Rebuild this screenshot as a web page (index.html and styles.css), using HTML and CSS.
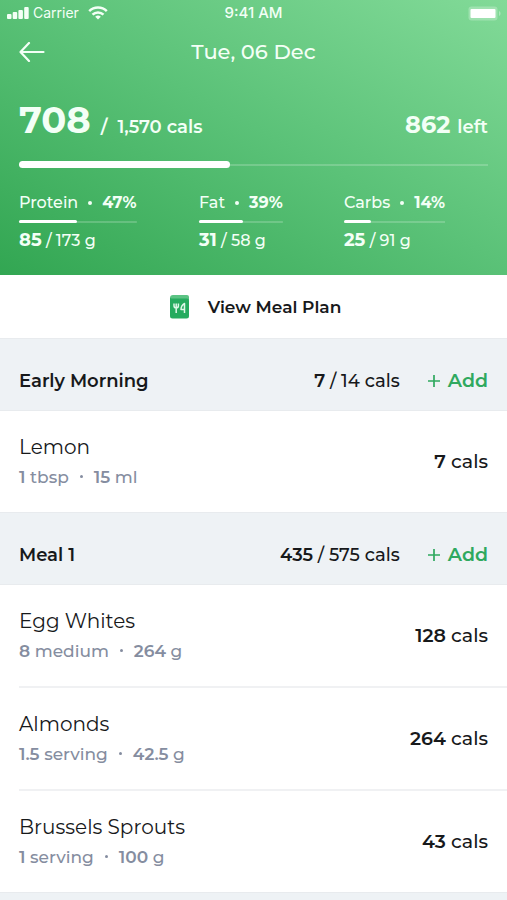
FILE: index.html
```html
<!DOCTYPE html>
<html lang="en">
<head>
<meta charset="utf-8">
<meta name="viewport" content="width=device-width, initial-scale=1">
<title>Food diary</title>
<link rel="stylesheet" href="styles.css">
</head>
<body>
<div class="app">
  <header class="summary">
    <div class="status">
      <div class="status-left">
        <svg width="22" height="12" viewBox="0 0 22 12" fill="currentColor" aria-hidden="true"><rect x="0" y="7" width="4.500" height="5" rx="1"/><rect x="5.700" y="5" width="4.500" height="7" rx="1"/><rect x="11.400" y="3" width="4.500" height="9" rx="1"/><rect x="17.200" y="0" width="4.500" height="12" rx="1"/></svg>
        <span>Carrier</span>
        <svg class="wifi" width="20" height="14" viewBox="0 0 20 14" fill="none" stroke="currentColor" stroke-width="2.5" aria-hidden="true"><path d="M1.2 5.2a12.5 12.5 0 0 1 17.6 0M4.5 8.700a7.8 7.8 0 0 1 11 0"/><path d="M7.2 10.8a4 4 0 0 1 5.6 0L10 13.6z" fill="currentColor" stroke="none"/></svg>
      </div>
      <span class="clock">9:41 AM</span>
      <svg class="battery" width="33" height="15" viewBox="0 0 33 15" aria-hidden="true"><rect x=".5" y=".5" width="29" height="14" rx="3" fill="#fff" fill-opacity=".25"/><rect x="2.500" y="3" width="25" height="9" rx="1" fill="#fff"/><path d="M31 5c2 .7 2 4.300 0 5z" fill="#fff" fill-opacity=".35"/></svg>
    </div>
    <nav class="topbar">
      <button class="back" type="button" aria-label="Back"><svg width="26" height="20" viewBox="0 0 26 20" fill="none" stroke="currentColor" stroke-width="2.2" stroke-linecap="round" stroke-linejoin="round" aria-hidden="true"><path d="M10 1 1.500 10l8.500 9M1.500 10h23"/></svg></button>
      <h1>Tue, 06 Dec</h1>
    </nav>
    <div class="totals">
      <p class="eaten"><strong>708</strong><span>/</span><span>1,570 cals</span></p>
      <p class="left"><strong>862</strong> left</p>
    </div>
    <div class="bar bar-main"><span class="fill" style="width:45%"></span></div>
    <div class="macros">
      <div class="macro">
        <p class="macro-name"><span>Protein</span><i class="dot"></i><b>47%</b></p>
        <div class="bar"><span class="fill" style="width:49%"></span></div>
        <p class="macro-amount"><b>85</b> / 173 g</p>
      </div>
      <div class="macro">
        <p class="macro-name"><span>Fat</span><i class="dot"></i><b>39%</b></p>
        <div class="bar"><span class="fill" style="width:53%"></span></div>
        <p class="macro-amount"><b>31</b> / 58 g</p>
      </div>
      <div class="macro">
        <p class="macro-name"><span>Carbs</span><i class="dot"></i><b>14%</b></p>
        <div class="bar"><span class="fill" style="width:27%"></span></div>
        <p class="macro-amount"><b>25</b> / 91 g</p>
      </div>
    </div>
  </header>

  <button class="plan" type="button">
    <svg width="20" height="24" viewBox="0 0 20 24" aria-hidden="true"><path d="M3 0h14a2 2 0 0 1 2 2v3H0V3a3 3 0 0 1 3-3z" fill="#5cc384"/><path d="M0 2.500c.3.800 1 1 2 1h15a2 2 0 0 1 2 2V21a2.500 2.500 0 0 1-2.500 2.500h-14A2.500 2.500 0 0 1 0 21z" fill="#26ab5f"/><path d="M4 8.500v2.300a2.200 2.200 0 0 0 4.400 0V8.500M6.200 8.500V18M14.500 18V8.500c-2.300 1.200-3.400 3.400-3.500 6h3.500" fill="none" stroke="#dff7e8" stroke-width="1.500" stroke-linejoin="round"/></svg>
    <span>View Meal Plan</span>
  </button>

  <main>
    <section>
      <div class="meal-head">
        <h2>Early Morning</h2>
        <p class="meal-cals"><b>7</b> / 14 cals</p>
        <button class="add" type="button"><svg width="12" height="12" viewBox="0 0 12 12" stroke="currentColor" stroke-width="1.700" aria-hidden="true"><path d="M6 0v12M0 6h12"/></svg>Add</button>
      </div>
      <ul>
        <li><div><h3>Lemon</h3><p class="portion"><span><b>1</b> tbsp</span><i class="dot"></i><span><b>15</b> ml</span></p></div><p class="cals"><b>7</b> cals</p></li>
      </ul>
    </section>
    <section>
      <div class="meal-head">
        <h2>Meal 1</h2>
        <p class="meal-cals"><b>435</b> / 575 cals</p>
        <button class="add" type="button"><svg width="12" height="12" viewBox="0 0 12 12" stroke="currentColor" stroke-width="1.700" aria-hidden="true"><path d="M6 0v12M0 6h12"/></svg>Add</button>
      </div>
      <ul>
        <li><div><h3>Egg Whites</h3><p class="portion"><span><b>8</b> medium</span><i class="dot"></i><span><b>264</b> g</span></p></div><p class="cals"><b>128</b> cals</p></li>
        <li><div><h3>Almonds</h3><p class="portion"><span><b>1.5</b> serving</span><i class="dot"></i><span><b>42.5</b> g</span></p></div><p class="cals"><b>264</b> cals</p></li>
        <li><div><h3>Brussels Sprouts</h3><p class="portion"><span><b>1</b> serving</span><i class="dot"></i><span><b>100</b> g</span></p></div><p class="cals"><b>43</b> cals</p></li>
      </ul>
    </section>
    <div class="meal-head"></div>
  </main>
</div>
</body>
</html>
```
FILE: styles.css
```css
* { box-sizing: border-box; }
body, h1, h2, h3, p, ul { margin: 0; padding: 0; }
body {
  background: #fff;
  color: #17191b;
  font-family: Montserrat, Inter, sans-serif;
  font-size: 18px;
  line-height: 24px;
}
button {
  border: 0;
  padding: 0;
  background: none;
  color: inherit;
  font: inherit;
  cursor: pointer;
}
svg { display: block; flex: none; }
b { font-weight: 600; }

.app {
  display: flex;
  flex-direction: column;
  height: 100vh;
  overflow: hidden;
}

.summary {
  flex: none;
  padding: 0 19px 24px;
  background: linear-gradient(to top right, #32a652, #5bc278 52%, #82da98);
  color: #f3fff6;
}
.status {
  display: grid;
  grid-template-columns: 1fr auto 1fr;
  align-items: center;
  height: 26px;
  margin: 0 -12px;
  font-family: Inter, sans-serif;
  font-size: 14px;
}
.status-left { display: flex; align-items: center; gap: 4px; }
.wifi { margin-left: 5px; }
.clock { font-size: 15px; font-weight: 500; }
.battery { justify-self: end; margin-right: -1px; }

.topbar {
  display: grid;
  grid-template-columns: 1fr auto 1fr;
  align-items: center;
  height: 52px;
}
.topbar h1 { font-size: 21px; font-weight: 500; }

.totals {
  display: flex;
  justify-content: space-between;
  align-items: baseline;
  margin-top: 22px;
  font-weight: 600;
  line-height: 40px;
}
.eaten { display: flex; align-items: baseline; gap: 10px; }
.eaten strong { font-size: 37px; font-weight: 700; }
.left strong { margin-right: 2px; font-size: 24px; font-weight: 700; }

.bar {
  display: flex;
  align-items: center;
  height: 3px;
  background: linear-gradient(#ffffff30, #ffffff30) center / 100% 2px no-repeat;
}
.fill { height: 100%; border-radius: 4px; background: #fff; }
.bar-main { height: 7px; margin-top: 14px; }

.macros {
  display: grid;
  grid-template-columns: 180fr 145fr 144fr;
  margin-top: 25px;
  font-size: 16px;
  font-weight: 500;
}
.macro { justify-self: start; line-height: 20px; }
.macro-name { display: flex; align-items: center; gap: 10px; margin-bottom: 7px; }
.macro-amount { margin-top: 7px; }
.macro-amount b { font-size: 18px; }
.macro b { font-weight: 700; }
.dot { width: 4px; height: 4px; border-radius: 50%; background: currentColor; }

.plan {
  display: flex;
  flex: none;
  justify-content: center;
  align-items: center;
  gap: 18px;
  height: 63px;
  padding-left: 4px;
  font-size: 17px;
  font-weight: 600;
}

.meal-head {
  display: flex;
  align-items: center;
  min-height: 73px;
  padding: 12px 19px 0;
  border: solid #e8ebee;
  border-width: 1px 0;
  background: #eef2f5;
}
.meal-head h2 { flex: 1; font-size: 18px; font-weight: 600; }
.meal-cals { font-weight: 500; }
.add {
  display: flex;
  align-items: center;
  gap: 8px;
  margin-left: 28px;
  color: #2fa95f;
  font-size: 19px;
  font-weight: 600;
}

ul { list-style: none; }
li {
  display: flex;
  justify-content: space-between;
  align-items: center;
  min-height: 103px;
  margin-left: 19px;
  padding-right: 19px;
  border-bottom: 2px solid #f0f1f3;
}
li:last-child { min-height: 101px; border-bottom: 0; }
h3 { font-size: 20px; font-weight: 400; line-height: 30px; }
.cals { font-size: 19px; font-weight: 500; }
.portion {
  display: flex;
  align-items: center;
  gap: 11px;
  color: #858da0;
  font-size: 17px;
  font-weight: 500;
  line-height: 30px;
}
.portion .dot { width: 3px; height: 3px; }
```
